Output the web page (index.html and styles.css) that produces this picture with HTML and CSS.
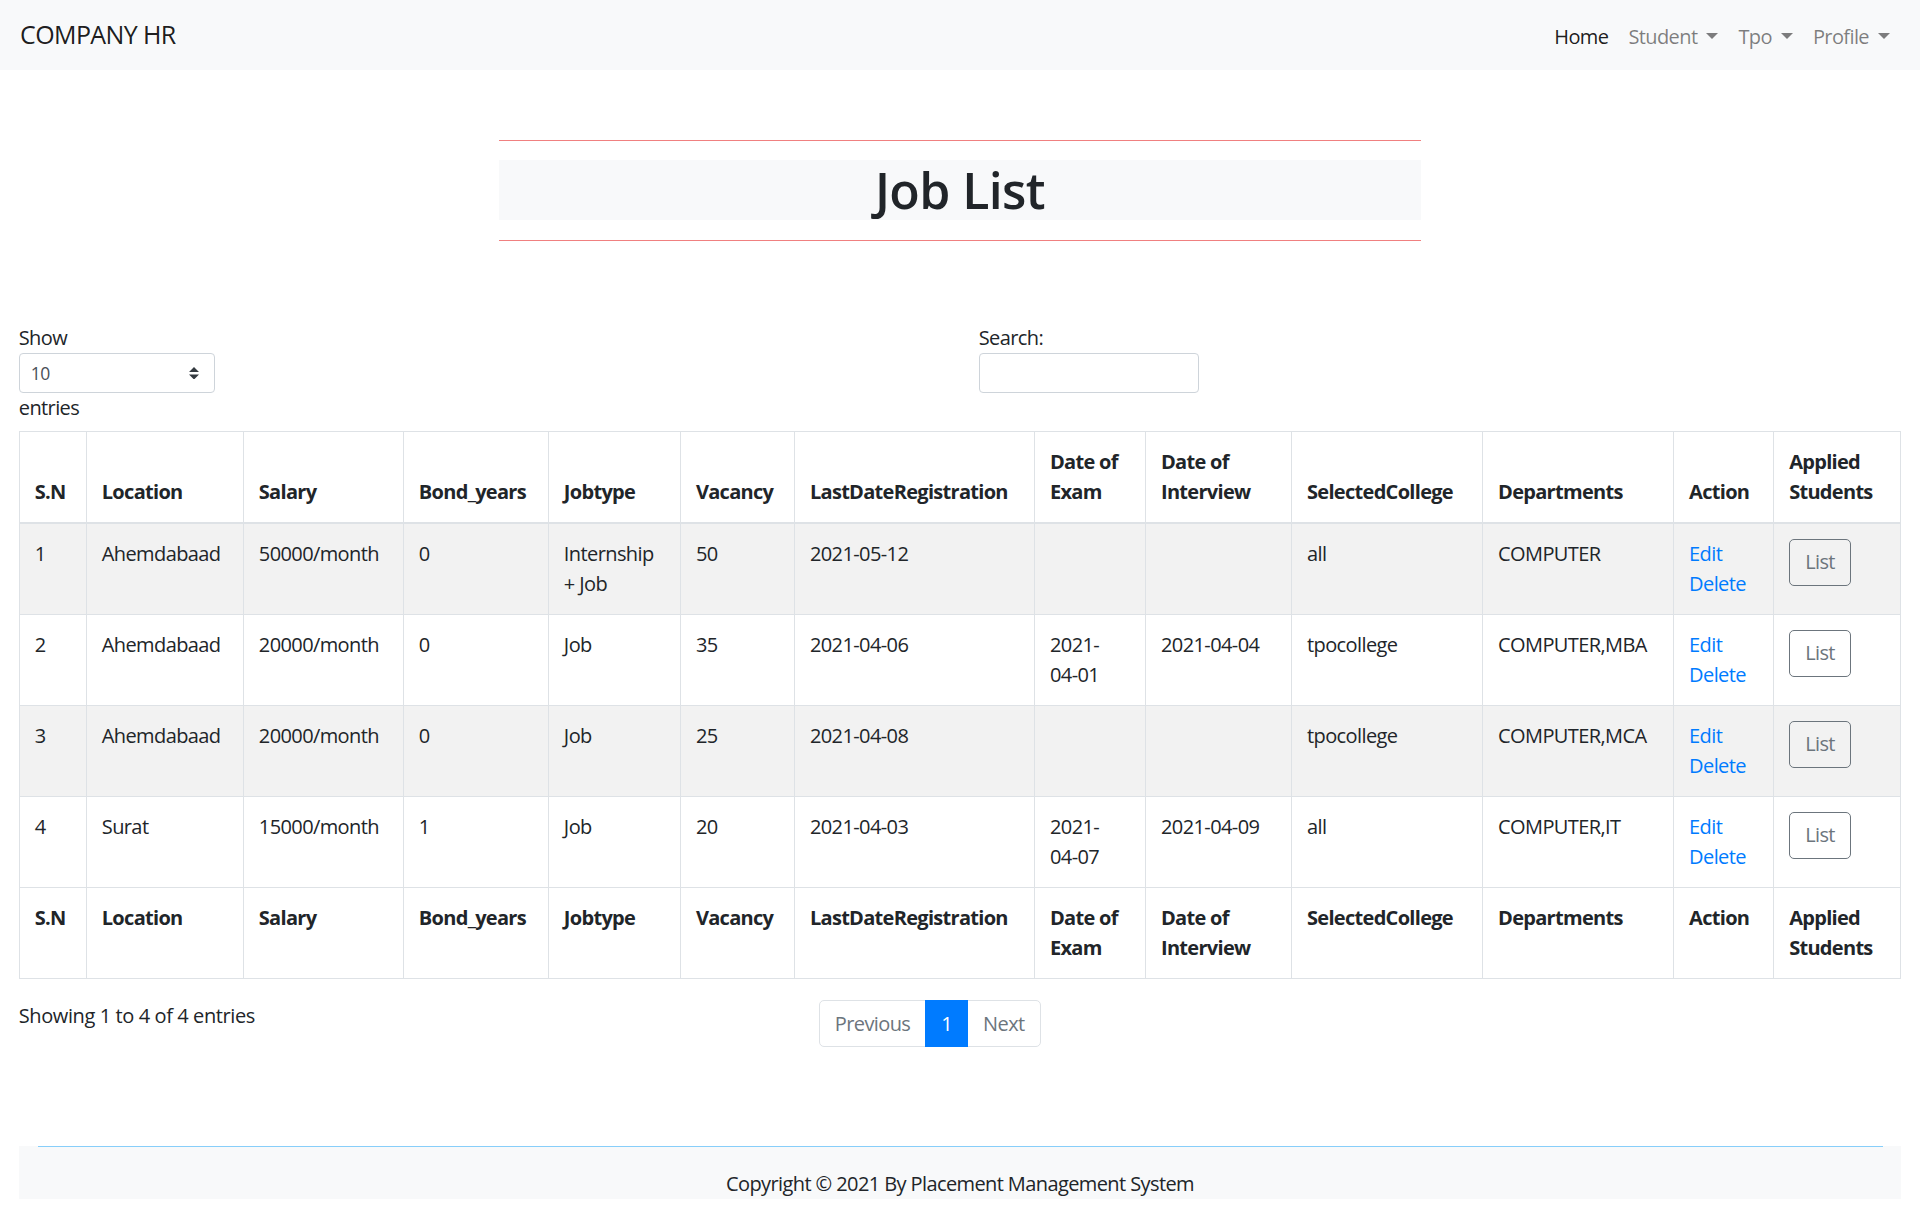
FILE: index.html
```html
<!DOCTYPE html>
<html lang="en">
<head>
<meta charset="utf-8">
<title>Job List</title>
<link rel="stylesheet" href="styles.css">
</head>
<body>
<nav class="navbar">
  <a class="brand" href="#">COMPANY HR</a>
  <ul class="nav">
    <li><a class="nav-link active" href="#">Home</a></li>
    <li><a class="nav-link" href="#">Student<span class="caret"></span></a></li>
    <li><a class="nav-link" href="#">Tpo<span class="caret"></span></a></li>
    <li><a class="nav-link" href="#">Profile<span class="caret"></span></a></li>
  </ul>
</nav>

<main class="page">
  <section class="title-section">
    <hr class="rule">
    <h1 class="title">Job List</h1>
    <hr class="rule">
  </section>

  <div class="dt-top">
    <div class="dt-length">
      <span class="dt-label">Show</span>
      <div class="fake-select">
        <span>10</span>
        <svg class="select-arrows" viewBox="0 0 4 5" width="10" height="12.5"><path d="M2 0L0 2h4zm0 5L0 3h4z" fill="#343a40"/></svg>
      </div>
      <span class="dt-label">entries</span>
    </div>
    <div class="dt-filter">
      <span class="dt-label">Search:</span>
      <input class="search-input" type="search">
    </div>
  </div>

  <table class="jobs">
    <colgroup>
      <col class="c-sn"><col class="c-loc"><col class="c-sal"><col class="c-bond"><col class="c-type">
      <col class="c-vac"><col class="c-last"><col class="c-exam"><col class="c-int"><col class="c-col">
      <col class="c-dep"><col class="c-act"><col class="c-app">
    </colgroup>
    <thead>
      <tr>
        <th>S.N</th><th>Location</th><th>Salary</th><th>Bond_years</th><th>Jobtype</th><th>Vacancy</th>
        <th>LastDateRegistration</th><th>Date of Exam</th><th>Date of Interview</th><th>SelectedCollege</th>
        <th>Departments</th><th>Action</th><th>Applied Students</th>
      </tr>
    </thead>
    <tbody>
      <tr class="odd">
        <td>1</td><td>Ahemdabaad</td><td>50000/month</td><td>0</td><td>Internship + Job</td><td>50</td>
        <td>2021-05-12</td><td></td><td></td><td>all</td><td>COMPUTER</td>
        <td><a class="act" href="#">Edit</a><a class="act" href="#">Delete</a></td>
        <td><button class="btn-list">List</button></td>
      </tr>
      <tr>
        <td>2</td><td>Ahemdabaad</td><td>20000/month</td><td>0</td><td>Job</td><td>35</td>
        <td>2021-04-06</td><td>2021-<span class="nowrap">04-01</span></td><td>2021-04-04</td><td>tpocollege</td><td>COMPUTER,MBA</td>
        <td><a class="act" href="#">Edit</a><a class="act" href="#">Delete</a></td>
        <td><button class="btn-list">List</button></td>
      </tr>
      <tr class="odd">
        <td>3</td><td>Ahemdabaad</td><td>20000/month</td><td>0</td><td>Job</td><td>25</td>
        <td>2021-04-08</td><td></td><td></td><td>tpocollege</td><td>COMPUTER,MCA</td>
        <td><a class="act" href="#">Edit</a><a class="act" href="#">Delete</a></td>
        <td><button class="btn-list">List</button></td>
      </tr>
      <tr>
        <td>4</td><td>Surat</td><td>15000/month</td><td>1</td><td>Job</td><td>20</td>
        <td>2021-04-03</td><td>2021-<span class="nowrap">04-07</span></td><td>2021-04-09</td><td>all</td><td>COMPUTER,IT</td>
        <td><a class="act" href="#">Edit</a><a class="act" href="#">Delete</a></td>
        <td><button class="btn-list">List</button></td>
      </tr>
    </tbody>
    <tfoot>
      <tr>
        <th>S.N</th><th>Location</th><th>Salary</th><th>Bond_years</th><th>Jobtype</th><th>Vacancy</th>
        <th>LastDateRegistration</th><th>Date of Exam</th><th>Date of Interview</th><th>SelectedCollege</th>
        <th>Departments</th><th>Action</th><th>Applied Students</th>
      </tr>
    </tfoot>
  </table>

  <div class="dt-bottom">
    <div class="dt-info">Showing 1 to 4 of 4 entries</div>
    <ul class="pagination">
      <li class="page-item disabled"><a class="page-link" href="#">Previous</a></li>
      <li class="page-item active"><a class="page-link" href="#">1</a></li>
      <li class="page-item disabled"><a class="page-link" href="#">Next</a></li>
    </ul>
  </div>
</main>

<footer class="site-footer">
  <hr class="footer-rule">
  <p class="copyright">Copyright © 2021 By Placement Management System</p>
</footer>
</body>
</html>
```

FILE: styles.css
```css
* { box-sizing: border-box; }

body {
  margin: 0;
  font-family: "Open Sans", "Noto Sans", sans-serif;
  font-size: 20px;
  line-height: 1.5;
  color: #212529;
  letter-spacing: -0.03em;
  background: #fff;
}

a { text-decoration: none; }

/* navbar */
.navbar {
  display: flex;
  align-items: center;
  justify-content: space-between;
  height: 70px;
  padding: 10px 20px;
  background: #f8f9fa;
}
.brand {
  font-size: 25px;
  line-height: 37.5px;
  color: rgba(0, 0, 0, 0.9);
}
.nav {
  display: flex;
  list-style: none;
  margin: 0;
  padding: 0;
}
.nav-link {
  display: block;
  padding: 12px 10px 8px;
  line-height: 30px;
  color: rgba(0, 0, 0, 0.5);
}
.nav-link.active { color: rgba(0, 0, 0, 0.9); }
.caret {
  display: inline-block;
  margin-left: 9px;
  vertical-align: 5px;
  border-top: 6px solid;
  border-left: 6px solid transparent;
  border-right: 6px solid transparent;
}

/* page */
.page { padding: 0 18.75px; }

.title-section {
  width: 922px;
  margin: 70px auto 0;
}
.rule {
  margin: 0;
  border: 0;
  border-top: 1px solid #f08080;
}
.title {
  margin: 19px 0 20px;
  height: 60px;
  background: #f8f9fa;
  font-size: 50px;
  font-weight: 600;
  line-height: 60px;
  text-align: center;
}

/* datatable top controls */
.dt-top {
  display: grid;
  grid-template-columns: 1fr 1fr;
  column-gap: 37.5px;
  margin-top: 82px;
}
.dt-label { display: block; line-height: 30px; }
.fake-select {
  display: flex;
  align-items: center;
  justify-content: space-between;
  width: 196px;
  height: 40px;
  padding: 0 15px 0 11px;
  border: 1px solid #ced4da;
  border-radius: 4px;
  font-size: 17.5px;
  color: #495057;
  background: #fff;
}
.select-arrows { display: block; }
.search-input {
  display: block;
  width: 220px;
  height: 40px;
  margin: 0;
  border: 1px solid #ced4da;
  border-radius: 4px;
  background: #fff;
  font: inherit;
}

/* table */
.jobs {
  width: 100%;
  margin-top: 7.5px;
  border-collapse: collapse;
  table-layout: fixed;
}
.c-sn { width: 67px; }
.c-loc { width: 157px; }
.c-sal { width: 160px; }
.c-bond { width: 145px; }
.c-type { width: 132px; }
.c-vac { width: 114px; }
.c-last { width: 240px; }
.c-exam { width: 111px; }
.c-int { width: 146px; }
.c-col { width: 191px; }
.c-dep { width: 191px; }
.c-act { width: 100px; }
.c-app { width: 127px; }

.jobs th,
.jobs td {
  padding: 15px;
  border: 1px solid #dee2e6;
  text-align: left;
  vertical-align: top;
  line-height: 30px;
}
.jobs th { font-weight: 700; letter-spacing: -0.035em; }
.jobs thead th {
  vertical-align: bottom;
  border-bottom: 2px solid #dee2e6;
}
.jobs tbody tr.odd { background: #f2f2f2; }
.nowrap { white-space: nowrap; }

.act {
  display: block;
  color: #007bff;
}
.btn-list {
  display: inline-block;
  padding: 7.5px 15px;
  border: 1px solid #6c757d;
  border-radius: 5px;
  background: transparent;
  color: #6c757d;
  font: inherit;
  letter-spacing: inherit;
  line-height: 30px;
}

/* bottom */
.dt-bottom {
  display: grid;
  grid-template-columns: 762.5px 1fr;
  column-gap: 37.5px;
  margin-top: 21px;
}
.dt-info {
  padding-top: 1px;
  line-height: 30px;
  letter-spacing: -0.02em;
}
.pagination {
  display: flex;
  list-style: none;
  margin: 0;
  padding: 0;
}
.page-link {
  display: block;
  padding: 10px 15px;
  line-height: 25px;
  border: 1px solid #dee2e6;
  margin-left: -1px;
  background: #fff;
  color: #007bff;
}
.page-item:first-child .page-link {
  margin-left: 0;
  border-radius: 5px 0 0 5px;
}
.page-item:last-child .page-link { border-radius: 0 5px 5px 0; }
.page-item.disabled .page-link { color: #6c757d; }
.page-item.active .page-link {
  position: relative;
  background: #007bff;
  border-color: #007bff;
  color: #fff;
}

/* footer */
.site-footer {
  margin: 99px 18.75px 0;
  padding: 0 18.75px;
  background: #f8f9fa;
}
.footer-rule {
  margin: 0;
  border: 0;
  border-top: 1px solid #87cefa;
}
.copyright {
  margin: 22px 0 0;
  line-height: 30px;
  text-align: center;
}
```
